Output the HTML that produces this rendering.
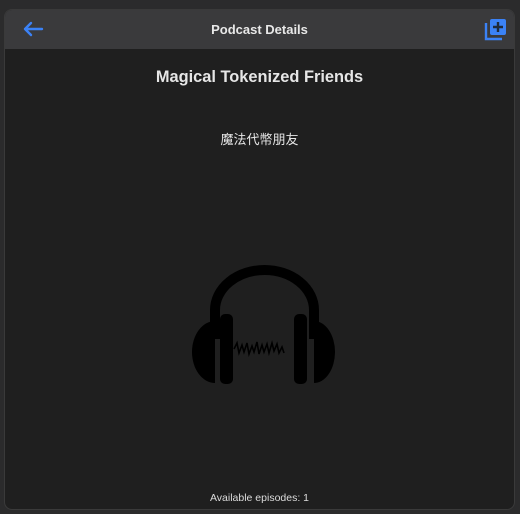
<!DOCTYPE html>
<html><head><meta charset="utf-8"><style>
html,body{margin:0;padding:0;width:520px;height:514px;background:#2b2b2c;overflow:hidden;font-family:"Liberation Sans","Noto Sans CJK SC",sans-serif;}
.win{position:absolute;left:4px;top:9px;width:511px;height:501px;background:#1f1f1f;border-radius:8px;overflow:hidden;border:1px solid #3a3a3a;box-sizing:border-box}
.hdr{position:absolute;left:0;top:0;width:100%;height:39px;background:#3a3a3c;}
.hdr .t{position:absolute;left:0;right:0;top:12px;text-align:center;color:#e8e8e8;font-weight:bold;font-size:13px}
.title{position:absolute;left:0;right:0;top:58px;text-align:center;color:#e6e6e6;font-weight:bold;font-size:16.4px}
.sub{position:absolute;left:0;right:0;top:119px;text-align:center;color:#e6e6e6;font-size:13px}
.foot{position:absolute;left:0;right:0;top:482px;text-align:center;color:#dcdcdc;font-size:10.5px}
</style></head><body>
<div class="win">
<div class="hdr">
<svg style="position:absolute;left:17px;top:11px" width="22" height="16" viewBox="0 0 22 16"><path d="M20 8H3M9 2L3 8l6 6" stroke="#3b82f6" stroke-width="2.4" fill="none" stroke-linecap="round" stroke-linejoin="round"/></svg>
<div class="t">Podcast Details</div>
<svg style="position:absolute;left:479px;top:7px" width="24" height="24" viewBox="0 0 24 24"><path d="M2 6v16h16" stroke="#3b82f6" stroke-width="2.4" fill="none"/><rect x="6" y="2" width="16" height="16" rx="2" fill="#3b82f6"/><path d="M14 5v10M9 10h10" stroke="#1f2a3a" stroke-width="2.4"/></svg>
</div>
<div class="title">Magical Tokenized Friends</div>
<div class="sub">魔法代幣朋友</div>
<svg style="position:absolute;left:0;top:0" width="511" height="501" viewBox="4 9 511 501">
<path d="M214 338V309a49.5 40 0 0 1 99 0v29" stroke="#000" stroke-width="10" fill="none"/>
<path d="M214 320a23 31 0 0 0 0 62z" fill="#000"/>
<path d="M313 320a21 31 0 0 1 0 62z" fill="#000"/>
<rect x="219" y="313" width="13" height="70" rx="5" fill="#000"/>
<rect x="293" y="313" width="13" height="70" rx="5" fill="#000"/>
<path d="M233 348l3-6 2 10 3-8 2 7 3-9 2 11 3-8 2 6 3-10 2 12 3-9 2 7 3-8 2 9 3-10 2 8 3-7 2 9 3-6 2 6" stroke="#000" stroke-width="1.6" fill="none"/>
</svg>
<div class="foot">Available episodes: 1</div>
</div>
</body></html>
